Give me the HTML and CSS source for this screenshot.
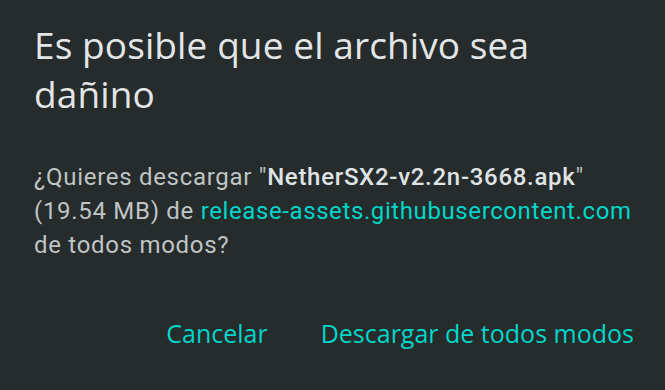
FILE: index.html
```html
<!DOCTYPE html>
<html lang="es">
<head>
<meta charset="utf-8">
<link rel="stylesheet" href="styles.css">
</head>
<body>
<div class="dialog">
  <h1 class="title">Es posible que el archivo sea dañino</h1>
  <p class="message">¿Quieres descargar "<span class="file">NetherSX2-v2.2n-3668.apk</span>" (19.54&nbsp;MB) de <span class="link">release-assets.githubusercontent.com</span> de todos modos?</p>
  <div class="actions">
    <span class="btn">Cancelar</span>
    <span class="btn">Descargar de todos modos</span>
  </div>
</div>
</body>
</html>
```
FILE: styles.css
```css
html, body {
  margin: 0;
  padding: 0;
  background: #262b2c;
  width: 665px;
  height: 390px;
  overflow: hidden;
}
.dialog {
  padding: 20px 31px 0 34px;
  box-sizing: border-box;
  height: 390px;
}
.title {
  margin: 0;
  font-family: "Open Sans", sans-serif;
  font-weight: 400;
  font-size: 37px;
  line-height: 49px;
  letter-spacing: 0.1px;
  color: #e2e6e6;
  width: 560px;
}
.message {
  margin: 42px 0 0;
  font-family: Roboto, sans-serif;
  font-size: 24px;
  line-height: 34px;
  letter-spacing: 0.7px;
  color: #bfc4c4;
  width: 600px;
}
.file {
  font-weight: 500;
  color: #dfe3e3;
}
.link {
  color: #00d6c9;
  letter-spacing: 0.6px;
}
.actions {
  display: flex;
  justify-content: flex-end;
  gap: 53px;
  margin-top: 56px;
  font-family: "Open Sans", sans-serif;
  font-size: 25px;
  line-height: 30px;
  font-weight: 500;
  color: #00d6c9;
}
.btn {
  white-space: nowrap;
}
```
